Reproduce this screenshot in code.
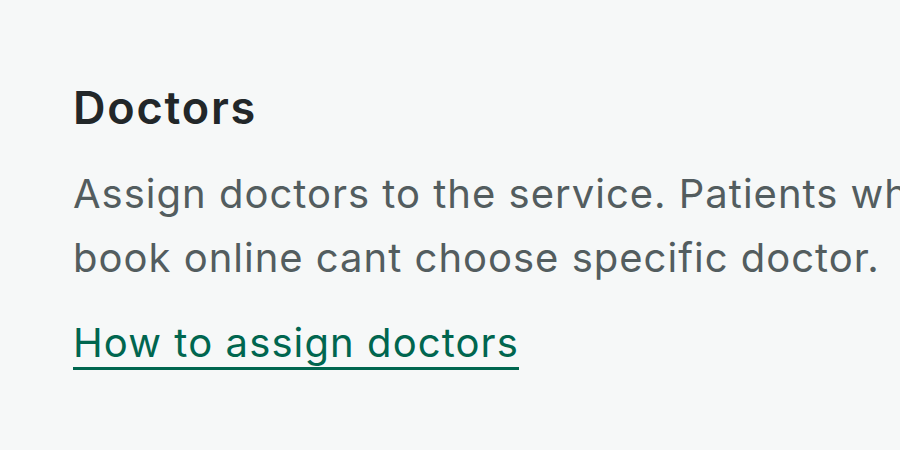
export default function App() {
  return (
    <div className="w-[900px] h-[450px] overflow-hidden bg-[#f6f8f8]" style={{ fontFamily: "Inter, 'Noto Sans', sans-serif" }}>
      <div className="w-[1020px] pl-[73px] pt-[80px]">
        <h1 className="text-[45px] leading-[56px] font-semibold tracking-[1.8px] text-[#222729]">Doctors</h1>
        <p className="mt-[26px] text-[40px] leading-[64px] tracking-[1px] text-[#535d5f]">
          Assign doctors to the service. Patients who book online cant choose specific doctor.
        </p>
        <a href="#" className="mt-[21px] inline-block text-[40px] leading-[64px] tracking-[1.1px] text-[#00664f] underline decoration-[2.5px] underline-offset-[10px] [text-decoration-skip-ink:none]">
          How to assign doctors
        </a>
      </div>
    </div>
  );
}
